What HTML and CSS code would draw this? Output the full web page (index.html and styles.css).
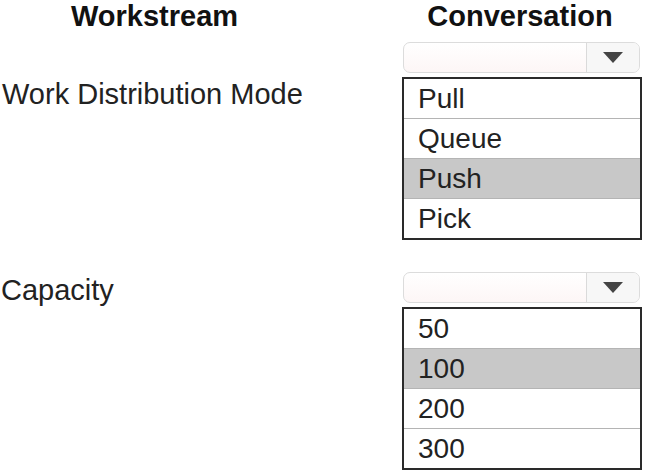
FILE: index.html
```html
<!DOCTYPE html>
<html>
<head>
<meta charset="utf-8">
<link rel="stylesheet" href="styles.css">
</head>
<body>
<div class="page">
  <div class="head head-left">Workstream</div>
  <div class="head head-right">Conversation</div>

  <div class="label label-mode">Work Distribution Mode</div>
  <div class="control">
    <div class="select"><span class="value"></span><span class="arrow"><span class="tri"></span></span></div>
    <ul class="list">
      <li>Pull</li>
      <li>Queue</li>
      <li class="sel">Push</li>
      <li>Pick</li>
    </ul>
  </div>

  <div class="label label-cap">Capacity</div>
  <div class="control control-2">
    <div class="select"><span class="value"></span><span class="arrow"><span class="tri"></span></span></div>
    <ul class="list">
      <li>50</li>
      <li class="sel">100</li>
      <li>200</li>
      <li>300</li>
    </ul>
  </div>
</div>
</body>
</html>
```

FILE: styles.css
```css
html, body {
  margin: 0;
  padding: 0;
  background: #ffffff;
}
body {
  font-family: "Liberation Sans", Arial, sans-serif;
  color: #222;
}
.page {
  display: grid;
  grid-template-columns: 402px 240px;
  align-items: start;
}
.head {
  font-weight: bold;
  font-size: 29px;
  line-height: 32px;
  color: #111;
  text-align: center;
  margin-bottom: 10px;
}
.head-left {
  padding-right: 93px;
}
.head-right {
  padding-right: 4px;
}
.label {
  font-size: 29px;
  line-height: 30px;
  color: #222;
  white-space: nowrap;
}
.label-mode {
  padding-top: 37px;
  padding-left: 2px;
}
.label-cap {
  padding-top: 35px;
  padding-left: 1px;
}
.control-2 {
  margin-top: 32px;
}
.select {
  display: flex;
  height: 31px;
  margin-left: 1px;
  margin-right: 2px;
  border: 1px solid #dcdcdc;
  border-radius: 7px;
  background: linear-gradient(#ffffff, #fdf6f6);
  box-sizing: border-box;
  margin-bottom: 4px;
  overflow: hidden;
}
.value {
  flex: 1;
}
.arrow {
  width: 52px;
  border-left: 1px solid #dadada;
  background: #f7f7f7;
  display: flex;
  align-items: center;
  justify-content: center;
}
.tri {
  width: 0;
  height: 0;
  border-left: 10px solid transparent;
  border-right: 10px solid transparent;
  border-top: 11px solid #444;
}
.list {
  list-style: none;
  margin: 0;
  padding: 0;
  border: 2px solid #2a2a2a;
  background: #fff;
}
.list li {
  font-size: 28px;
  line-height: 39px;
  height: 39px;
  padding-left: 14px;
  border-bottom: 1px solid #b4b4b4;
  color: #222;
}
.list li:last-child {
  border-bottom: none;
}
.list li.sel {
  background: #c8c8c8;
}
```
